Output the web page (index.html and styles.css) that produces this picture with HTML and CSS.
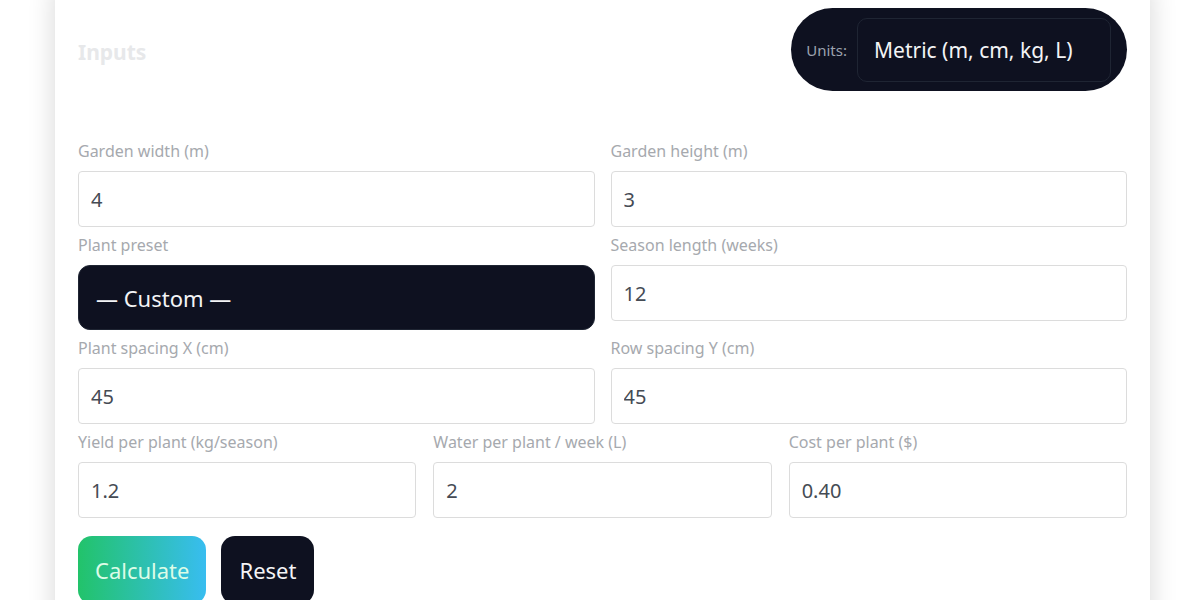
FILE: index.html
```html
<!DOCTYPE html>
<html lang="en">
<head>
<meta charset="utf-8">
<title>Garden planner</title>
<link rel="stylesheet" href="styles.css">
</head>
<body>
<section class="card">
  <header class="card-head">
    <h2 class="title">Inputs</h2>
    <div class="units">
      <span class="units-label">Units:</span>
      <select class="units-select">
        <option>Metric (m, cm, kg, L)</option>
      </select>
    </div>
  </header>

  <div class="grid two">
    <label class="field">
      <span class="field-label">Garden width (m)</span>
      <input class="input" type="text" value="4">
    </label>
    <label class="field">
      <span class="field-label">Garden height (m)</span>
      <input class="input" type="text" value="3">
    </label>
    <label class="field">
      <span class="field-label">Plant preset</span>
      <select class="preset">
        <option>— Custom —</option>
      </select>
    </label>
    <label class="field">
      <span class="field-label">Season length (weeks)</span>
      <input class="input" type="text" value="12">
    </label>
    <label class="field">
      <span class="field-label">Plant spacing X (cm)</span>
      <input class="input" type="text" value="45">
    </label>
    <label class="field">
      <span class="field-label">Row spacing Y (cm)</span>
      <input class="input" type="text" value="45">
    </label>
  </div>

  <div class="grid three">
    <label class="field">
      <span class="field-label">Yield per plant (kg/season)</span>
      <input class="input" type="text" value="1.2">
    </label>
    <label class="field">
      <span class="field-label">Water per plant / week (L)</span>
      <input class="input" type="text" value="2">
    </label>
    <label class="field">
      <span class="field-label">Cost per plant ($)</span>
      <input class="input" type="text" value="0.40">
    </label>
  </div>

  <div class="actions">
    <button class="btn btn-primary" type="button">Calculate</button>
    <button class="btn btn-dark" type="button">Reset</button>
  </div>
</section>
</body>
</html>
```

FILE: styles.css
```css
* { box-sizing: border-box; }

html, body {
  margin: 0;
  padding: 0;
  background: #ffffff;
  overflow: hidden;
  height: 600px;
}

body {
  font-family: "Noto Sans", "Open Sans", sans-serif;
  color: #374151;
}

.card {
  width: 1095px;
  margin: -20px 0 0 55px;
  padding: 28px 23px 40px;
  background: #ffffff;
  border-radius: 16px;
  box-shadow: 0 0 28px rgba(0, 0, 0, 0.16);
}

.card-head {
  display: flex;
  align-items: center;
  justify-content: space-between;
  margin-bottom: 50px;
}

.title {
  margin: 4px 0 0;
  font-size: 21px;
  font-weight: 700;
  color: #e7e8ea;
}

.units {
  display: flex;
  align-items: center;
  gap: 10px;
  height: 83px;
  padding: 0 16px 0 15px;
  background: #0e1120;
  border-radius: 42px;
}

.units-label {
  font-size: 15px;
  color: #9ca3af;
}

.units-select {
  appearance: none;
  -webkit-appearance: none;
  width: 254px;
  height: 64px;
  padding: 0 16px;
  background: #0e1120;
  border: 1px solid #1f2533;
  border-radius: 10px;
  color: #f3f4f6;
  font-family: inherit;
  font-size: 21px;
}

.grid {
  display: grid;
  row-gap: 8px;
}

.grid.two {
  grid-template-columns: 1fr 1fr;
  column-gap: 16px;
  align-items: start;
}

.grid.three {
  grid-template-columns: 1fr 1fr 1fr;
  column-gap: 17px;
  margin-top: 8px;
}

.field {
  display: flex;
  flex-direction: column;
}

.field-label {
  font-size: 16px;
  line-height: 20px;
  margin-bottom: 10px;
  color: #a6a9ae;
}

.input {
  height: 56px;
  padding: 0 12px;
  border: 1px solid #dcdcdc;
  border-radius: 4px;
  background: #ffffff;
  color: #454b54;
  font-family: inherit;
  font-size: 20px;
  outline: none;
}

.preset {
  appearance: none;
  -webkit-appearance: none;
  height: 65px;
  padding: 0 17px;
  background: #0e1120;
  border: 1px solid #1f2533;
  border-radius: 12px;
  color: #f3f4f6;
  font-family: inherit;
  font-size: 22px;
}

.actions {
  display: flex;
  gap: 15px;
  margin-top: 18px;
}

.btn {
  height: 68px;
  padding: 0 17px;
  border: none;
  border-radius: 14px;
  font-family: inherit;
  font-size: 22px;
  cursor: pointer;
}

.btn-primary {
  background: linear-gradient(90deg, #22c36a 0%, #38bdf0 100%);
  color: #dcfce7;
}

.btn-dark {
  padding: 0 18px;
  background: #0e1120;
  color: #f3f4f6;
}
```
